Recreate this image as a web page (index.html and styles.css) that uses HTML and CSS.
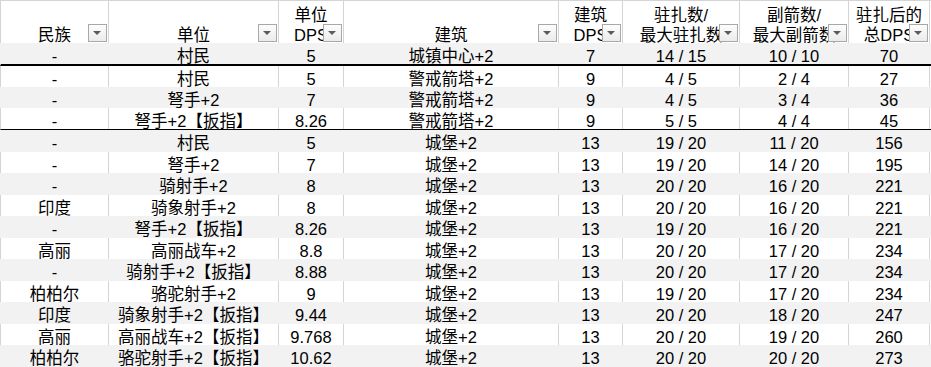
FILE: index.html
```html
<!DOCTYPE html>
<html lang="zh">
<head>
<meta charset="utf-8">
<title>驻扎DPS</title>
<link rel="stylesheet" href="styles.css">
</head>
<body>
<div class="sheet">
  <div class="row head">
    <div class="h"><span></span><span>民族</span><i class="dd"></i></div>
    <div class="h"><span></span><span>单位</span><i class="dd"></i></div>
    <div class="h"><span>单位</span><span>DPS</span><i class="dd"></i></div>
    <div class="h"><span></span><span>建筑</span><i class="dd"></i></div>
    <div class="h"><span>建筑</span><span>DPS</span><i class="dd"></i></div>
    <div class="h"><span>驻扎数/</span><span>最大驻扎数</span><i class="dd"></i></div>
    <div class="h"><span>副箭数/</span><span>最大副箭数</span><i class="dd"></i></div>
    <div class="h"><span>驻扎后的</span><span>总DPS</span><i class="dd"></i></div>
  </div>

  <div class="row g r21 sep2"><div class="c">-</div><div class="c">村民</div><div class="c">5</div><div class="c">城镇中心+2</div><div class="c">7</div><div class="c">14 / 15</div><div class="c">10 / 10</div><div class="c">70</div></div>

  <div class="row w r21"><div class="c">-</div><div class="c">村民</div><div class="c">5</div><div class="c">警戒箭塔+2</div><div class="c">9</div><div class="c">4 / 5</div><div class="c">2 / 4</div><div class="c">27</div></div>
  <div class="row g r21"><div class="c">-</div><div class="c">弩手+2</div><div class="c">7</div><div class="c">警戒箭塔+2</div><div class="c">9</div><div class="c">4 / 5</div><div class="c">3 / 4</div><div class="c">36</div></div>
  <div class="row w r21 sep1"><div class="c">-</div><div class="c">弩手+2【扳指】</div><div class="c">8.26</div><div class="c">警戒箭塔+2</div><div class="c">9</div><div class="c">5 / 5</div><div class="c">4 / 4</div><div class="c">45</div></div>

  <div class="row g r22"><div class="c">-</div><div class="c">村民</div><div class="c">5</div><div class="c">城堡+2</div><div class="c">13</div><div class="c">19 / 20</div><div class="c">11 / 20</div><div class="c">156</div></div>
  <div class="row w r21"><div class="c">-</div><div class="c">弩手+2</div><div class="c">7</div><div class="c">城堡+2</div><div class="c">13</div><div class="c">19 / 20</div><div class="c">14 / 20</div><div class="c">195</div></div>
  <div class="row g r22"><div class="c">-</div><div class="c">骑射手+2</div><div class="c">8</div><div class="c">城堡+2</div><div class="c">13</div><div class="c">20 / 20</div><div class="c">16 / 20</div><div class="c">221</div></div>
  <div class="row w r21"><div class="c">印度</div><div class="c">骑象射手+2</div><div class="c">8</div><div class="c">城堡+2</div><div class="c">13</div><div class="c">20 / 20</div><div class="c">16 / 20</div><div class="c">221</div></div>
  <div class="row g r22"><div class="c">-</div><div class="c">弩手+2【扳指】</div><div class="c">8.26</div><div class="c">城堡+2</div><div class="c">13</div><div class="c">19 / 20</div><div class="c">16 / 20</div><div class="c">221</div></div>
  <div class="row w r21"><div class="c">高丽</div><div class="c">高丽战车+2</div><div class="c">8.8</div><div class="c">城堡+2</div><div class="c">13</div><div class="c">20 / 20</div><div class="c">17 / 20</div><div class="c">234</div></div>
  <div class="row g r22"><div class="c">-</div><div class="c">骑射手+2【扳指】</div><div class="c">8.88</div><div class="c">城堡+2</div><div class="c">13</div><div class="c">20 / 20</div><div class="c">17 / 20</div><div class="c">234</div></div>
  <div class="row w r21"><div class="c">柏柏尔</div><div class="c">骆驼射手+2</div><div class="c">9</div><div class="c">城堡+2</div><div class="c">13</div><div class="c">19 / 20</div><div class="c">17 / 20</div><div class="c">234</div></div>
  <div class="row g r22"><div class="c">印度</div><div class="c">骑象射手+2【扳指】</div><div class="c">9.44</div><div class="c">城堡+2</div><div class="c">13</div><div class="c">20 / 20</div><div class="c">18 / 20</div><div class="c">247</div></div>
  <div class="row w r21"><div class="c">高丽</div><div class="c">高丽战车+2【扳指】</div><div class="c">9.768</div><div class="c">城堡+2</div><div class="c">13</div><div class="c">20 / 20</div><div class="c">19 / 20</div><div class="c">260</div></div>
  <div class="row g r22"><div class="c">柏柏尔</div><div class="c">骆驼射手+2【扳指】</div><div class="c">10.62</div><div class="c">城堡+2</div><div class="c">13</div><div class="c">20 / 20</div><div class="c">20 / 20</div><div class="c">273</div></div>
</div>
</body>
</html>
```

FILE: styles.css
```css
:root {
  --line: #d4d4d4;
  --band: #f2f2f2;
}

html, body {
  margin: 0;
  background: #ffffff;
}

body {
  font-family: "Liberation Sans", "Noto Sans CJK SC", sans-serif;
  font-size: 16.5px;
  color: #000000;
  overflow: hidden;
}

.sheet {
  width: 931px;
}

.row {
  display: grid;
  grid-template-columns: 108px 170px 65px 215px 64px 117px 109px 81px;
  box-sizing: border-box;
  width: 931px;
}

.head {
  grid-template-rows: 42px;
  background: #ffffff;
  border-top: 1px solid var(--line);
  border-left: 1px solid var(--line);
}

.h {
  position: relative;
  border-right: 1px solid var(--line);
  padding-top: 4px;
  line-height: 20px;
  text-align: center;
  white-space: nowrap;
  overflow: hidden;
}

.h span {
  display: block;
  height: 20px;
}

.dd {
  position: absolute;
  right: 1px;
  bottom: 1px;
  width: 19px;
  height: 18px;
  box-sizing: border-box;
  border: 1px solid #a8a8a8;
  background: linear-gradient(#fdfdfd, #ebebeb);
}

.dd::after {
  content: "";
  position: absolute;
  left: 4px;
  top: 6px;
  width: 0;
  height: 0;
  border-left: 4px solid transparent;
  border-right: 4px solid transparent;
  border-top: 4px solid #5b5b5b;
}

.w {
  background: #ffffff;
  border-left: 1px solid var(--line);
}

.g {
  background: var(--band);
  border-left: 1px solid var(--band);
}

.r21 { grid-template-rows: 21px; }
.r22 { grid-template-rows: 22px; }

.sep2 { border-bottom: 2px solid #000000; }
.sep1 { border-bottom: 1px solid #000000; }

.c {
  border-right: 1px solid var(--line);
  padding-top: 3px;
  line-height: 21px;
  text-align: center;
  white-space: nowrap;
  min-width: 0;
}

.g .c {
  border-right-color: var(--band);
}
```
